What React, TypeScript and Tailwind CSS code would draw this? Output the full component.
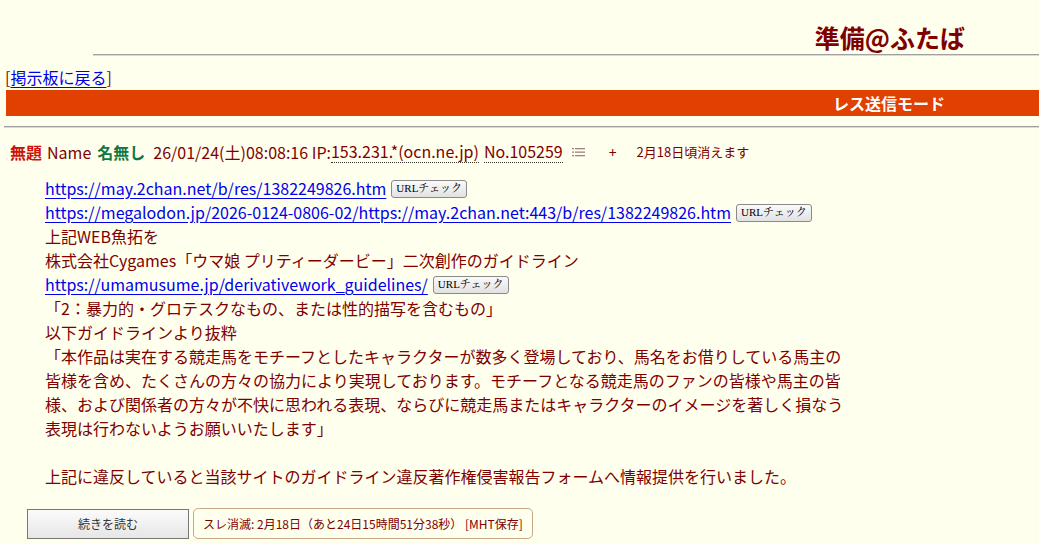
import React from 'react'

const jp = { fontFamily: '"Noto Sans CJK JP", "Noto Sans", sans-serif' }

function UrlCheck() {
  return (
    <button
      className="ml-[5px] inline-flex h-[18px] items-center rounded-[3px] border border-[#8a8a8a] bg-gradient-to-b from-[#fafafa] to-[#e2e2e2] px-[4px] align-[3px] text-[11px] leading-none text-black"
      style={{ fontFamily: '"Liberation Serif", "Noto Serif CJK JP", serif' }}
    >
      URLチェック
    </button>
  )
}

function Link({ children }: { children: React.ReactNode }) {
  return <a className="text-[#0000ee] underline underline-offset-[3px]">{children}</a>
}

export default function App() {
  return (
    <div className="min-h-screen bg-[#ffffee] text-[#800000]" style={jp}>
      {/* Title */}
      <div className="pt-[21px]">
        <div className="pr-[74px] text-right text-[25px] font-bold leading-[33px] text-[#800000]">準備@ふたば</div>
        <div className="ml-[93px] h-[2px] border-t border-[#a0a0a0] bg-[#dcdccc]" />
      </div>

      {/* Back link */}
      <div className="mt-[11px] pl-[5px] text-[16px] leading-[20px]">
        [<Link>掲示板に戻る</Link>]
      </div>

      {/* Mode bar */}
      <div className="ml-[6px] mt-[3px] flex h-[26px] items-center justify-end bg-[#e04000] pr-[94px]">
        <span className="text-[16px] font-bold text-white">レス送信モード</span>
      </div>
      <div className="ml-[4px] mt-[10px] h-[2px] border-t border-[#a0a0a0] bg-[#dcdccc]" />

      {/* Post header */}
      <div className="mt-[12px] flex items-center pl-[10px] text-[16px] leading-[22px]">
        <span className="font-bold text-[#cc1105]">無題</span>
        <span className="ml-[5px]">Name</span>
        <span className="ml-[6px] font-bold text-[#117743]">名無し</span>
        <span className="ml-[8px]">26/01/24(土)08:08:16 IP:</span>
        <span className="border-b border-dotted border-[#333]">153.231.*(ocn.ne.jp)</span>
        <span className="ml-[5px] border-b border-dotted border-[#333]">No.105259</span>
        <svg className="ml-[9px]" width="13" height="12" viewBox="0 0 13 12">
          <g fill="#a08080">
            <rect x="0" y="2" width="2" height="1.3" />
            <rect x="3" y="2" width="10" height="1.3" />
            <rect x="0" y="5.5" width="2" height="1.3" />
            <rect x="3" y="5.5" width="10" height="1.3" />
            <rect x="0" y="9" width="2" height="1.3" />
            <rect x="3" y="9" width="10" height="1.3" />
          </g>
        </svg>
        <span className="ml-[24px] text-[14px]">+</span>
        <span className="ml-[20px] text-[13px]">2月18日頃消えます</span>
      </div>

      {/* Body */}
      <div className="mt-[13px] pl-[45px] text-[16px] leading-[24px]">
        <div>
          <Link>https://may.2chan.net/b/res/1382249826.htm</Link>
          <UrlCheck />
        </div>
        <div>
          <Link>https://megalodon.jp/2026-0124-0806-02/https://may.2chan.net:443/b/res/1382249826.htm</Link>
          <UrlCheck />
        </div>
        <div>上記WEB魚拓を</div>
        <div>株式会社Cygames「ウマ娘 プリティーダービー」二次創作のガイドライン</div>
        <div>
          <Link>https://umamusume.jp/derivativework_guidelines/</Link>
          <UrlCheck />
        </div>
        <div>「2：暴力的・グロテスクなもの、または性的描写を含むもの」</div>
        <div>以下ガイドラインより抜粋</div>
        <div>「本作品は実在する競走馬をモチーフとしたキャラクターが数多く登場しており、馬名をお借りしている馬主の</div>
        <div>皆様を含め、たくさんの方々の協力により実現しております。モチーフとなる競走馬のファンの皆様や馬主の皆</div>
        <div>様、および関係者の方々が不快に思われる表現、ならびに競走馬またはキャラクターのイメージを著しく損なう</div>
        <div>表現は行わないようお願いいたします」</div>
        <div className="h-[24px]" />
        <div>上記に違反していると当該サイトのガイドライン違反著作権侵害報告フォームへ情報提供を行いました。</div>
      </div>

      {/* Footer actions */}
      <div className="mt-[20px] flex items-center pl-[27px]">
        <button className="h-[30px] w-[162px] border border-[#767676] bg-gradient-to-b from-[#fbfbfb] to-[#e6e6e6] text-[12px] text-[#333]">
          続きを読む
        </button>
        <div className="ml-[4px] flex h-[31px] items-center rounded-[5px] border border-[#c8a888] px-[9px] text-[12px]">
          スレ消滅: 2月18日（あと24日15時間51分38秒） [MHT保存]
        </div>
      </div>
    </div>
  )
}
